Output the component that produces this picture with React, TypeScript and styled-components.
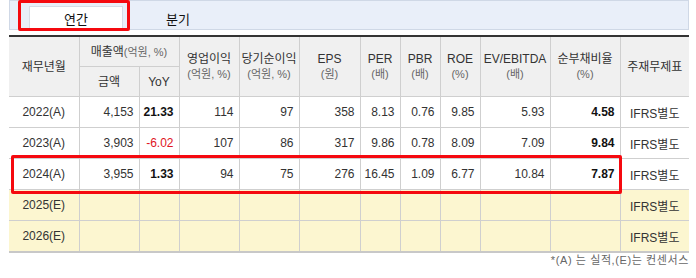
import React from 'react';
import styled, { createGlobalStyle } from 'styled-components';

const GlobalStyle = createGlobalStyle`
  html, body { margin: 0; padding: 0; background: #fff; }
  body {
    font-family: "Liberation Sans", "Noto Sans CJK KR", sans-serif;
    font-size: 12px;
    color: #333;
  }
`;

const Page = styled.div`
  position: relative;
  width: 680px;
  padding-left: 9px;
`;

const TabBar = styled.div`
  display: flex;
  align-items: flex-end;
  gap: 8px;
  box-sizing: border-box;
  height: 30px;
  padding-left: 19px;
  background: #e9eff9;
  border: 1px solid #cfd8e6;
`;

const Tab = styled.div<{ $active?: boolean }>`
  box-sizing: border-box;
  width: 94px;
  height: 24px;
  margin-bottom: -1px;
  display: flex;
  align-items: center;
  justify-content: center;
  font-family: "Noto Sans CJK KR", sans-serif;
  font-size: 13px;
  color: #111;
  background: ${p => (p.$active ? '#fff' : 'transparent')};
  border: 1px solid ${p => (p.$active ? '#d6dce6' : 'transparent')};
  border-bottom: none;
`;

const Highlight = styled.div`
  position: absolute;
  box-sizing: border-box;
  border: 3px solid #f5090f;
  border-radius: 2px;
  pointer-events: none;
`;

const Table = styled.table`
  margin-top: 5px;
  width: 680px;
  table-layout: fixed;
  border-collapse: collapse;
  border-top: 2px solid #333;
  border-bottom: 2px solid #c8c8c8;
`;

const Th = styled.th`
  background: #f0f0f0;
  font-weight: normal;
  font-family: "Liberation Sans", "Noto Sans CJK KR", sans-serif;
  font-size: 12px;
  color: #333;
  line-height: 16px;
  height: 29px;
  padding: 0;
  text-align: center;
  vertical-align: middle;
  white-space: nowrap;
  border: 1px solid #cfcfcf;
  border-top: none;
  &:first-child { border-left: none; }
  &:last-child { border-right: none; }
`;

const Line = styled.div`
  line-height: 16px;
`;

const Unit = styled.div`
  font-size: 11px;
  line-height: 15px;
  color: #666;
`;

const InlineUnit = styled.span`
  font-size: 11px;
  color: #666;
`;

const Tr = styled.tr<{ $estimate?: boolean }>`
  background: ${p => (p.$estimate ? '#fcf6d0' : '#fff')};
`;

const Td = styled.td<{ $align?: 'left' | 'center' | 'right'; $bold?: boolean; $neg?: boolean }>`
  height: 30px;
  padding: 0 5px 0 0;
  text-align: ${p => p.$align ?? 'right'};
  font-weight: ${p => (p.$bold ? 'bold' : 'normal')};
  color: ${p => (p.$neg ? '#e0141e' : p.$bold ? '#111' : '#333')};
  border: 1px solid #cfcfcf;
  border-top: none;
  white-space: nowrap;
  &:first-child { border-left: none; padding: 0; }
  &:last-child { border-right: none; padding: 0; }
`;

const Footer = styled.div`
  text-align: right;
  font-size: 11px;
  letter-spacing: 0.6px;
  color: #666;
  line-height: 14px;
`;

type Row = {
  label: string;
  estimate?: boolean;
  cells: { v: string; bold?: boolean; neg?: boolean }[];
};

const rows: Row[] = [
  {
    label: '2022(A)',
    cells: [
      { v: '4,153' }, { v: '21.33', bold: true }, { v: '114' }, { v: '97' }, { v: '358' },
      { v: '8.13' }, { v: '0.76' }, { v: '9.85' }, { v: '5.93' }, { v: '4.58', bold: true },
    ],
  },
  {
    label: '2023(A)',
    cells: [
      { v: '3,903' }, { v: '-6.02', neg: true }, { v: '107' }, { v: '86' }, { v: '317' },
      { v: '9.86' }, { v: '0.78' }, { v: '8.09' }, { v: '7.09' }, { v: '9.84', bold: true },
    ],
  },
  {
    label: '2024(A)',
    cells: [
      { v: '3,955' }, { v: '1.33', bold: true }, { v: '94' }, { v: '75' }, { v: '276' },
      { v: '16.45' }, { v: '1.09' }, { v: '6.77' }, { v: '10.84' }, { v: '7.87', bold: true },
    ],
  },
  { label: '2025(E)', estimate: true, cells: Array.from({ length: 10 }, () => ({ v: '' })) },
  { label: '2026(E)', estimate: true, cells: Array.from({ length: 10 }, () => ({ v: '' })) },
];

const widths = [70, 60, 40, 60, 60, 61, 40, 40, 40, 70, 70, 69];

const headers: { title: string; unit?: string }[] = [
  { title: '영업이익', unit: '(억원, %)' },
  { title: '당기순이익', unit: '(억원, %)' },
  { title: 'EPS', unit: '(원)' },
  { title: 'PER', unit: '(배)' },
  { title: 'PBR', unit: '(배)' },
  { title: 'ROE', unit: '(%)' },
  { title: 'EV/EBITDA', unit: '(배)' },
  { title: '순부채비율', unit: '(%)' },
];

export default function App() {
  return (
    <>
      <GlobalStyle />
      <Page>
        <TabBar>
          <Tab $active>연간</Tab>
          <Tab>분기</Tab>
        </TabBar>
        <Table>
          <colgroup>
            {widths.map((w, i) => (
              <col key={i} style={{ width: w }} />
            ))}
          </colgroup>
          <thead>
            <tr>
              <Th rowSpan={2}>재무년월</Th>
              <Th colSpan={2}>
                매출액<InlineUnit>(억원, %)</InlineUnit>
              </Th>
              {headers.map(h => (
                <Th key={h.title} rowSpan={2}>
                  <Line>{h.title}</Line>
                  <Unit>{h.unit}</Unit>
                </Th>
              ))}
              <Th rowSpan={2}>주재무제표</Th>
            </tr>
            <tr>
              <Th>금액</Th>
              <Th>YoY</Th>
            </tr>
          </thead>
          <tbody>
            {rows.map(r => (
              <Tr key={r.label} $estimate={r.estimate}>
                <Td $align="center">{r.label}</Td>
                {r.cells.map((c, i) => (
                  <Td key={i} $bold={c.bold} $neg={c.neg}>{c.v}</Td>
                ))}
                <Td $align="center">IFRS별도</Td>
              </Tr>
            ))}
          </tbody>
        </Table>
        <Footer>*(A) 는 실적,(E)는 컨센서스</Footer>
        <Highlight style={{ left: 18, top: 0, width: 112, height: 31 }} />
        <Highlight style={{ left: 11, top: 155, width: 611, height: 39 }} />
      </Page>
    </>
  );
}
